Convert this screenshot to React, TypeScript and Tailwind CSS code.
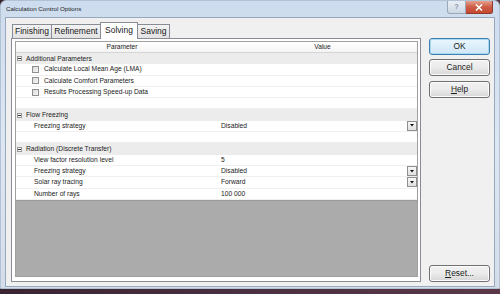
import React from "react";

const font = { fontFamily: '"Liberation Sans", Arial, sans-serif' };

function Minus() {
  return (
    <div className="w-[5px] h-[5px] border border-[#9a9a9a] bg-white flex items-center justify-center mr-[4px] shrink-0">
      <div className="w-[3px] h-[1px] bg-[#333]" />
    </div>
  );
}

function Check() {
  return (
    <div className="w-[7px] h-[7px] border border-[#8f8f8f] bg-gradient-to-br from-[#dcdcdc] to-[#f6f6f6] mr-[5px] shrink-0" />
  );
}

function Drop() {
  return (
    <div className="w-[10px] h-[10px] border border-[#8f8f8f] bg-gradient-to-b from-[#f8f8f8] to-[#e0e0e0] flex items-center justify-center shrink-0">
      <svg width="4" height="3" viewBox="0 0 4 3">
        <path d="M0 0 H4 L2 2.5 Z" fill="#111" />
      </svg>
    </div>
  );
}

type Row =
  | { kind: "group"; label: string }
  | { kind: "check"; label: string }
  | { kind: "item"; label: string; value?: string; drop?: boolean }
  | { kind: "empty" };

const rows: Row[] = [
  { kind: "group", label: "Additional Parameters" },
  { kind: "check", label: "Calculate Local Mean Age (LMA)" },
  { kind: "check", label: "Calculate Comfort Parameters" },
  { kind: "check", label: "Results Processing Speed-up Data" },
  { kind: "empty" },
  { kind: "group", label: "Flow Freezing" },
  { kind: "item", label: "Freezing strategy", value: "Disabled", drop: true },
  { kind: "empty" },
  { kind: "group", label: "Radiation (Discrete Transfer)" },
  { kind: "item", label: "View factor resolution level", value: "5" },
  { kind: "item", label: "Freezing strategy", value: "Disabled", drop: true },
  { kind: "item", label: "Solar ray tracing", value: "Forward", drop: true },
  { kind: "item", label: "Number of rays", value: "100 000" },
];

function GridRow({ r }: { r: Row }) {
  if (r.kind === "group") {
    return (
      <div className="h-[11.3px] bg-[#ececec] flex items-center pl-[1px] text-[6.7px] text-[#222]">
        <Minus />
        <span>{r.label}</span>
      </div>
    );
  }
  if (r.kind === "check") {
    return (
      <div className="h-[11.3px] bg-white border-b border-[#efefef] flex items-center pl-[16px] text-[6.7px] text-[#222]">
        <Check />
        <span>{r.label}</span>
      </div>
    );
  }
  if (r.kind === "empty") {
    return <div className="h-[11.3px] bg-white border-b border-[#efefef]" />;
  }
  return (
    <div className="h-[11.3px] bg-white border-b border-[#efefef] flex items-center text-[6.7px] text-[#222]">
      <div className="w-[205px] pl-[18px] shrink-0">{r.label}</div>
      <div className="flex-1 flex items-center justify-between">
        <span>{r.value}</span>
        {r.drop ? <Drop /> : null}
      </div>
    </div>
  );
}

function Btn({ children, ok }: { children: React.ReactNode; ok?: boolean }) {
  return (
    <div
      className={
        "h-[17px] w-[61px] rounded-[3px] flex items-center justify-center text-[8.4px] text-[#1a1a1a] " +
        (ok
          ? "border border-[#3c7fb1] bg-gradient-to-b from-[#eaf6fd] to-[#cfe7f6] shadow-[inset_0_0_0_1px_#a8d8f2]"
          : "border border-[#707070] bg-gradient-to-b from-[#f2f2f2] via-[#ebebeb] to-[#d6d6d6] shadow-[inset_0_0_0_1px_#fcfcfc]")
      }
    >
      {children}
    </div>
  );
}

export default function App() {
  return (
    <div className="w-[500px] h-[294px] bg-gradient-to-r from-[#3a2432] via-[#4a3040] to-[#5a3848] overflow-hidden" style={font}>
      <div className="h-[289px] w-[500px] rounded-t-[6px] bg-gradient-to-b from-[#cddcee] via-[#dce7f3] to-[#d3deea] border border-[#b4c3d4] flex flex-col">
        {/* title bar */}
        <div className="h-[16px] flex items-start shrink-0">
          <div className="pl-[5px] pt-[5px] text-[6.2px] text-[#1a1a1a] leading-none">Calculation Control Options</div>
          <div className="ml-auto mr-[6px] flex">
            <div className="w-[19px] h-[13px] rounded-bl-[3px] border border-[#9aa7b6] border-t-0 bg-gradient-to-b from-[#e9eff6] to-[#cdd8e4] flex items-center justify-center text-[7px] text-[#5a6574]">
              ?
            </div>
            <div className="w-[27px] h-[13px] rounded-br-[3px] border border-[#8e3a30] border-t-0 border-l-0 bg-gradient-to-b from-[#e6a08e] via-[#cc5b46] to-[#c5492f] flex items-center justify-center">
              <svg width="8" height="7" viewBox="0 0 8 7">
                <path d="M1 0.5 L7 6.5 M7 0.5 L1 6.5" stroke="#fff" strokeWidth="1.6" />
              </svg>
            </div>
          </div>
        </div>
        {/* client */}
        <div className="mx-[4px] mb-[1px] flex-1 bg-[#f0f0f0] border border-[#97a8bc] flex">
          <div className="w-[410px] ml-[5px] pt-[4px] pb-[4px] flex flex-col">
            {/* tabs */}
            <div className="h-[16px] flex items-end pl-[1px] relative z-10 shrink-0">
              <div className="w-[40px] h-[14px] border border-[#898c95] border-b-0 bg-gradient-to-b from-[#f3f3f3] to-[#e2e2e2] flex items-center justify-center text-[8.5px] text-[#1a1a1a]">
                Finishing
              </div>
              <div className="w-[50px] -ml-[1px] h-[14px] border border-[#898c95] border-b-0 bg-gradient-to-b from-[#f3f3f3] to-[#e2e2e2] flex items-center justify-center text-[8.5px] text-[#1a1a1a]">
                Refinement
              </div>
              <div className="w-[38px] -ml-[1px] h-[17px] -mb-[1px] border border-[#898c95] border-b-0 bg-white flex items-start pt-[1px] justify-center text-[8.5px] text-[#1a1a1a]">
                Solving
              </div>
              <div className="w-[33px] -ml-[1px] h-[14px] border border-[#898c95] border-b-0 bg-gradient-to-b from-[#f3f3f3] to-[#e2e2e2] flex items-center justify-center text-[8.5px] text-[#1a1a1a]">
                Saving
              </div>
            </div>
            {/* panel */}
            <div className="flex-1 border border-[#898c95] bg-white pt-[2px] pl-[3px] pr-[2px] pb-[4px] flex flex-col">
              <div className="flex-1 border border-[#a0a0a0] flex flex-col bg-[#ababab]">
                <div className="h-[11px] flex bg-gradient-to-b from-white to-[#f4f4f4] border-b border-[#d5d5d5] text-[6.6px] text-[#222] shrink-0">
                  <div className="w-[212px] flex items-center justify-center">Parameter</div>
                  <div className="flex-1 flex items-center justify-center">Value</div>
                </div>
                <div className="shrink-0">
                  {rows.map((r, i) => (
                    <GridRow key={i} r={r} />
                  ))}
                </div>
                <div className="flex-1 border-t border-[#9a9a9a]" />
              </div>
            </div>
          </div>
          {/* buttons */}
          <div className="ml-[8px] w-[61px] pt-[20px] pb-[4px] flex flex-col">
            <Btn ok>OK</Btn>
            <div className="mt-[4px]">
              <Btn>Cancel</Btn>
            </div>
            <div className="mt-[5px]">
              <Btn>
                <span className="underline">H</span>elp
              </Btn>
            </div>
            <div className="mt-auto">
              <Btn>
                <span className="underline">R</span>eset...
              </Btn>
            </div>
          </div>
        </div>
      </div>
    </div>
  );
}
